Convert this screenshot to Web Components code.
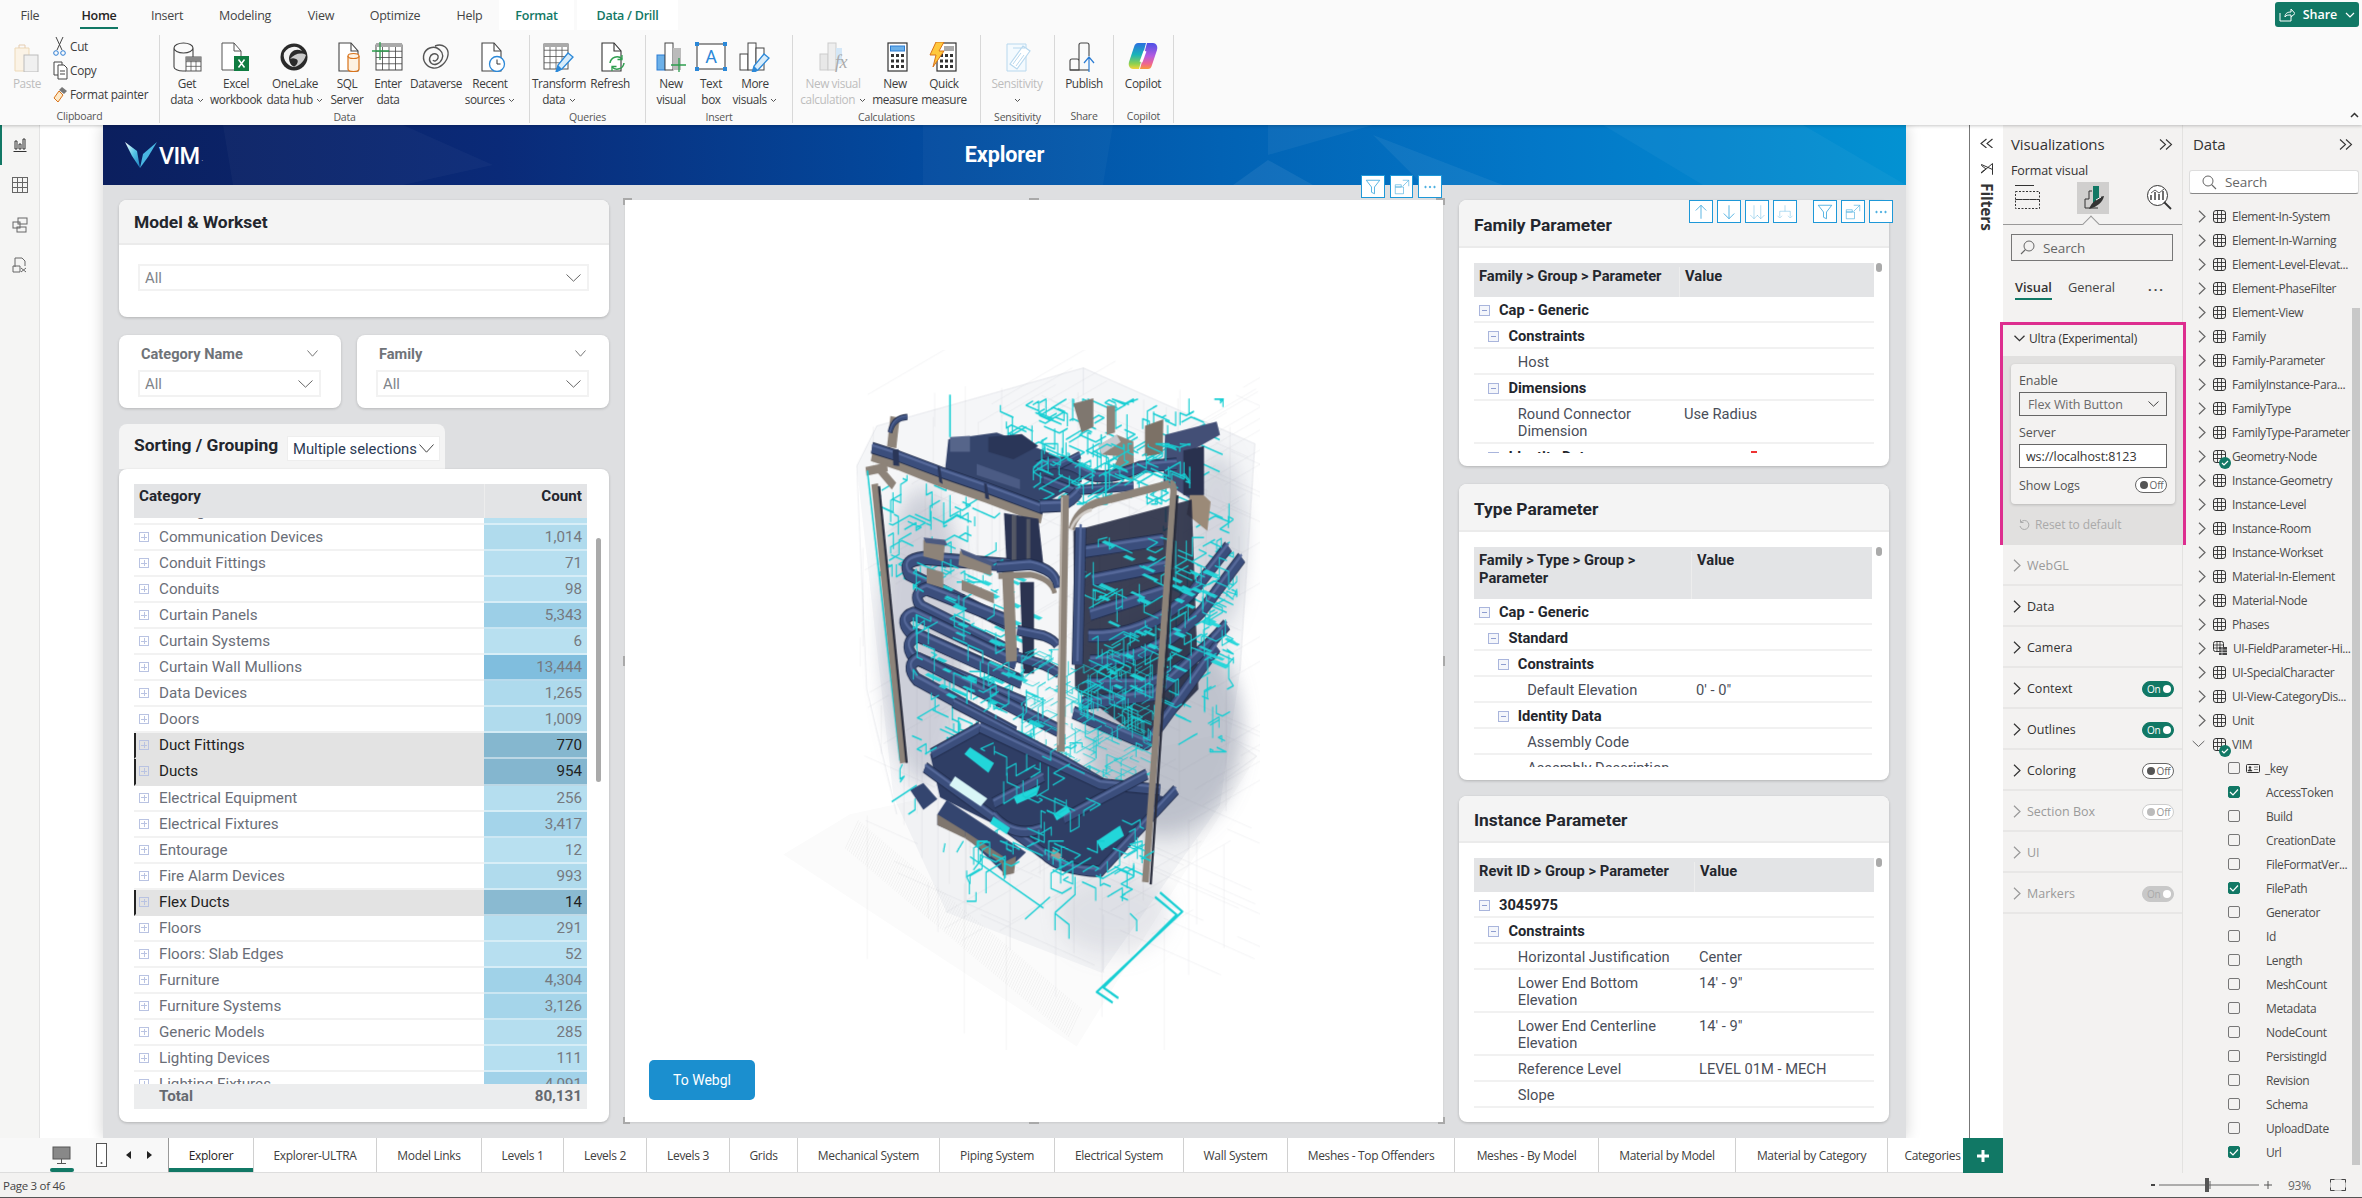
<!doctype html>
<html lang="en"><head><meta charset="utf-8"><title>Explorer</title>
<style>html,body{margin:0;background:#fff;overflow:hidden}</style></head>
<body>
<pbi-app>
  <pbi-ribbon slot="a">
    <rb-group w="160" label="Clipboard">
      <rb-btn w="54" icon="paste" off>Paste</rb-btn>
      <rb-small-list></rb-small-list>
    </rb-group>
    <rb-group w="370" label="Data">
      <rb-btn w="54" icon="getdata">Get<br>data <chev-d></chev-d></rb-btn>
      <rb-btn w="44" icon="excel">Excel<br>workbook</rb-btn>
      <rb-btn w="74" icon="onelake">OneLake<br>data hub <chev-d></chev-d></rb-btn>
      <rb-btn w="30" icon="sql">SQL<br>Server</rb-btn>
      <rb-btn w="52" icon="enter">Enter<br>data</rb-btn>
      <rb-btn w="44" icon="dataverse">Dataverse</rb-btn>
      <rb-btn w="64" icon="recent">Recent<br>sources <chev-d></chev-d></rb-btn>
    </rb-group>
    <rb-group w="116" label="Queries">
      <rb-btn w="58" icon="transform">Transform<br>data <chev-d></chev-d></rb-btn>
      <rb-btn w="44" icon="refresh">Refresh</rb-btn>
    </rb-group>
    <rb-group w="147" label="Insert">
      <rb-btn w="50" icon="newvisual">New<br>visual</rb-btn>
      <rb-btn w="30" icon="textbox">Text<br>box</rb-btn>
      <rb-btn w="58" icon="more">More<br>visuals <chev-d></chev-d></rb-btn>
    </rb-group>
    <rb-group w="188" label="Calculations">
      <rb-btn w="80" icon="fx" off>New visual<br>calculation <chev-d></chev-d></rb-btn>
      <rb-btn w="44" icon="measure">New<br>measure</rb-btn>
      <rb-btn w="54" icon="quick">Quick<br>measure</rb-btn>
    </rb-group>
    <rb-group w="74" label="Sensitivity">
      <rb-btn w="72" icon="sens" off>Sensitivity<br><chev-d></chev-d></rb-btn>
    </rb-group>
    <rb-group w="59" label="Share"><rb-btn w="58" icon="publish">Publish</rb-btn></rb-group>
    <rb-group w="60" label="Copilot"><rb-btn w="58" icon="copilot">Copilot</rb-btn></rb-group>
  </pbi-ribbon>

  <pbi-workspace slot="b">
    <pbi-page>
      <div slot="left">
        <pbi-card title="Model &amp; Workset" head="45" style="height:117px;flex:none"><div style="padding:19px 20px 0 19px"><pbi-drop>All</pbi-drop></div></pbi-card>
        <div style="display:flex;gap:16px;margin-top:18px">
          <pbi-slicer title="Category Name" style="width:222px"></pbi-slicer>
          <pbi-slicer title="Family" style="width:252px"></pbi-slicer>
        </div>
        <sort-tab></sort-tab>
        <cat-table></cat-table>
      </div>
      <bim-visual slot="center"></bim-visual>
      <div slot="right">
        <pbi-card title="Family Parameter" head="48" low tools style="height:266px">
          <param-table c1="205" h="34" body="156" w="400" head1="Family &gt; Group &gt; Parameter">
            <param-row lv="0" b>Cap - Generic</param-row>
            <param-row lv="1" b>Constraints</param-row>
            <param-row lv="2">Host</param-row>
            <param-row lv="1" b>Dimensions</param-row>
            <param-row lv="2" v="Use Radius">Round Connector<br>Dimension</param-row>
            <param-row lv="1" b>Identity Data<i slot="val" style="display:block;width:6px;height:2px;background:#e33;margin:2px 0 0 67px"></i></param-row>
          </param-table>
        </pbi-card>
        <pbi-card title="Type Parameter" head="48" low style="height:296px;margin-top:18px">
          <param-table c1="217" h="52" body="168" w="398" head1="Family &gt; Type &gt; Group &gt; Parameter">
            <param-row lv="0" b>Cap - Generic</param-row>
            <param-row lv="1" b>Standard</param-row>
            <param-row lv="2" b>Constraints</param-row>
            <param-row lv="3" v="0' - 0&quot;">Default Elevation</param-row>
            <param-row lv="2" b>Identity Data</param-row>
            <param-row lv="3">Assembly Code</param-row>
            <param-row lv="3">Assembly Description</param-row>
          </param-table>
        </pbi-card>
        <pbi-card title="Instance Parameter" head="47" low style="height:326px;margin-top:16px">
          <param-table c1="220" h="34" body="219" w="400" head1="Revit ID &gt; Group &gt; Parameter">
            <param-row lv="0" b>3045975</param-row>
            <param-row lv="1" b>Constraints</param-row>
            <param-row lv="2" v="Center">Horizontal Justification</param-row>
            <param-row lv="2" v="14' - 9&quot;">Lower End Bottom<br>Elevation</param-row>
            <param-row lv="2" v="14' - 9&quot;">Lower End Centerline<br>Elevation</param-row>
            <param-row lv="2" v="LEVEL 01M - MECH">Reference Level</param-row>
            <param-row lv="2">Slope</param-row>
          </param-table>
        </pbi-card>
      </div>
    </pbi-page>
  </pbi-workspace>

  <pbi-tabs slot="c"></pbi-tabs>
  <pbi-panes slot="d"></pbi-panes>
  <pbi-status slot="e"></pbi-status>
</pbi-app>

<script>
const SEG='"Open Sans","Noto Sans",sans-serif', RB='Roboto,"Liberation Sans",sans-serif', TEAL='#117865';
const def=(name,css,html)=>customElements.define(name,class extends HTMLElement{
  connectedCallback(){ if(this.shadowRoot) return; this.attachShadow({mode:'open'}).innerHTML='<style>'+css+'</style>'+(typeof html==='function'?html(this):html); }
});
const svg=(w,h,b,vb)=>`<svg xmlns="http://www.w3.org/2000/svg" width="${w}" height="${h}" viewBox="${vb||`0 0 ${w} ${h}`}" style="display:block;flex:none">${b}</svg>`;
const chevD=(w=12,h=7,c='#555')=>svg(w,h,`<path d="M.5 .5L${w/2} ${h-.8}L${w-.5} .5" fill="none" stroke="${c}" stroke-width="1"/>`);
const chevR=(c='#555')=>svg(8,13,`<path d="M1 .7L7 6.5L1 12.3" fill="none" stroke="${c}" stroke-width="1.2"/>`);
const L='fill="none" stroke="#444" stroke-width="1.1"';
const grid=(x,y,w,h,c,r,col='#555')=>{let s=`<rect x="${x}" y="${y}" width="${w}" height="${h}" fill="#fff" stroke="${col}"/>`;for(let i=1;i<c;i++)s+=`<path d="M${x+w*i/c} ${y}v${h}" stroke="${col}" stroke-width=".8"/>`;for(let i=1;i<r;i++)s+=`<path d="M${x} ${y+h*i/r}h${w}" stroke="${col}" stroke-width=".8"/>`;return s};
const doc=(c='#444')=>`<path d="M8 1h12l7 8v20H8z" fill="#fff" stroke="${c}" stroke-width="1.1"/><path d="M20 1v8h7" fill="none" stroke="${c}" stroke-width="1.1"/>`;
const pencil=(x,y)=>`<g transform="translate(${x} ${y})"><path d="M0 19L2 12L12 0L17 4L6 16z" fill="#d8ecfa" stroke="#2b88d8" stroke-width="1.3"/><path d="M0 19L2 12L6 16z" fill="#2b88d8"/></g>`;
const calc=()=>{let s=`<rect x="9" y="1" width="19" height="28" fill="#fff" stroke="#333" stroke-width="1.2"/>`;for(let r=0;r<3;r++)for(let c=0;c<3;c++)s+=`<rect x="${12+c*5}" y="${12+r*5.5}" width="3" height="3" fill="#333"/>`;return s};
const IC={
 paste:svg(32,30,`<path d="M4 6h14v23H4z" fill="#fbf3e6" stroke="#edd9b8"/><path d="M8 6V3h6v3" fill="none" stroke="#e5ccb0"/><rect x="13" y="13" width="14" height="17" fill="#f0f0f0" stroke="#bbb"/>`),
 getdata:svg(32,30,`<path d="M3 6v19c0 2 4 4 9 4h3M3 6c0-2.5 4-5 9.500-5S22 3.500 22 6s-4 5-9.500 5S3 8.500 3 6zM22 6v9" ${L}/>`+grid(15,15,15,14,3,3,'#555')+`<rect x="15" y="15" width="15" height="4" fill="#888"/>`),
 excel:svg(32,30,`<path d="M2 1h12l7 8v19H2z" fill="#fff" stroke="#555"/><path d="M14 1v8h7" fill="none" stroke="#555"/><rect x="14" y="14" width="15" height="15" fill="#107c41"/><path d="M18.500 17.500l6 8M24.500 17.500l-6 8" stroke="#fff" stroke-width="1.500"/>`),
 onelake:svg(32,30,`<circle cx="15" cy="15" r="13.500" fill="#2a2a2a"/><path d="M5 11c5-8 14-8 18-2-6-3-12 0-13 7 0 5 3 9 7 9-6 1-14-6-12-14z" fill="#f2f2f2"/><path d="M11 17c4-5 11-7 16-4-2 8-9 12-12 12 4-3 5-7 2-8-2-1-4-1-6 0z" fill="#c9c9c9"/>`),
 sql:svg(32,30,doc()+`<path d="M17 14v13c0 1.500 2.500 2.500 5.500 2.500s5.500-1 5.500-2.500V14" fill="#fdf2e3" stroke="#d9731a" stroke-width="1.2"/><ellipse cx="22.500" cy="14" rx="5.500" ry="2.500" fill="#fdf2e3" stroke="#d9731a" stroke-width="1.200"/>`),
 enter:svg(32,30,grid(4,3,26,25,4,4,'#444')+`<rect x="4" y="1" width="26" height="4" fill="#aaa"/><path d="M8 0v18M0 9h17" stroke="#2e9e4f" stroke-width="1.300"/>`),
 dataverse:svg(32,30,`<g fill="none" stroke="#555" stroke-width="1.400"><path d="M15 4c8-3 14 2 13 9s-8 14-15 13S2 18 4 12s9-8 13-6 7 6 5 11-8 7-11 4-1-8 2-9 6 1 5 4-4 4-5 2"/></g>`),
 recent:svg(32,30,doc()+`<circle cx="23" cy="22" r="7.500" fill="#fff" stroke="#2b88d8" stroke-width="1.300"/><path d="M23 17.500V22h3.500" fill="none" stroke="#333"/>`),
 transform:svg(32,30,grid(1,2,24,25,4,4,'#555')+`<rect x="1" y="1" width="24" height="4" fill="#aaa"/>`+pencil(13,11)),
 refresh:svg(32,30,doc('#333')+`<path d="M16 21a7 7 0 0 1 12-4M30 21a7 7 0 0 1-12 4" fill="none" stroke="#2e9e4f" stroke-width="1.500"/><path d="M28 13v4.500h-4.500M18 29v-4.500h4.500" fill="none" stroke="#2e9e4f" stroke-width="1.300"/>`),
 newvisual:svg(32,30,`<rect x="2" y="13" width="8" height="15" fill="#6cb0e8" stroke="#2b7cd3"/><rect x="10" y="1" width="8" height="27" fill="#fff" stroke="#444"/><rect x="18" y="6" width="8" height="22" fill="#bbb"/><path d="M24 16v15M16 23h15" stroke="#2e9e4f" stroke-width="1.300"/>`),
 textbox:svg(32,30,`<rect x="2" y="2" width="28" height="25" fill="#fff" stroke="#333"/><g fill="#2b88d8"><rect y="0" width="4" height="4"/><rect x="28" width="4" height="4"/><rect y="25" width="4" height="4"/><rect x="28" y="25" width="4" height="4"/></g><text x="16" y="21" text-anchor="middle" font-family="${RB.replace(/"/g,"'")}" font-size="18" fill="#2b88d8">A</text>`),
 more:svg(32,30,`<rect x="1" y="12" width="8" height="16" fill="#fff" stroke="#444"/><rect x="9" y="1" width="8" height="27" fill="#fff" stroke="#444"/><rect x="17" y="6" width="8" height="22" fill="#fff" stroke="#444"/>`+pencil(13,12)),
 fx:svg(32,30,`<rect x="3" y="12" width="8" height="16" fill="#e8e8e8" stroke="#ccc"/><rect x="11" y="1" width="8" height="27" fill="#eee" stroke="#ccc"/><rect x="19" y="6" width="6" height="16" fill="#d4e7f7"/><text x="18" y="26" font-family="'Liberation Serif',serif" font-style="italic" font-size="18" fill="#aaa">fx</text>`),
 measure:svg(32,30,calc()+`<rect x="11.500" y="4" width="14" height="5" fill="#6cb0e8" stroke="#2b7cd3"/>`),
 quick:svg(32,30,calc()+`<rect x="16" y="4" width="10" height="5" fill="#aaa"/><path d="M8 0h8l-5 9h5L5 25l3-12H2z" fill="#ffc83d" stroke="#d9731a"/>`),
 sens:svg(32,30,`<path d="M6 2h19v27H6z" fill="#f4fafe" stroke="#b8d8ee"/><path d="M12 6l12 0M9 22L22 4l7 5L16 27z" fill="#fff" stroke="#b8d8ee" stroke-width="1.200"/><path d="M12 22L20 11M15 24L23 13" stroke="#b8d8ee"/>`),
 publish:svg(32,30,`<path d="M2 28V19q0-2 2-2h5q2 0 2 2v9zM11 28V3q0-2 2-2h6q2 0 2 2v11" ${L}/><path d="M2 28h19" ${L}/><path d="M21 32V15M16 21l5-6 5 6" fill="none" stroke="#2b7cd3" stroke-width="1.200"/>`),
 copilot:svg(32,28,`<defs><linearGradient id="a" x1="0" y1="0" x2="0" y2="1"><stop offset="0" stop-color="#2a6fe0"/><stop offset=".45" stop-color="#19b4b8"/><stop offset=".8" stop-color="#8fd14f"/><stop offset="1" stop-color="#f5d43a"/></linearGradient><linearGradient id="b" x1="0" y1="0" x2="0" y2="1"><stop offset="0" stop-color="#4b50e6"/><stop offset=".5" stop-color="#b45be0"/><stop offset=".8" stop-color="#f0658f"/><stop offset="1" stop-color="#f79a3a"/></linearGradient></defs><path d="M11 1h8l-7 26H6c-3 0-5-3-4-7L7 5c1-3 2-4 4-4z" fill="url(#a)"/><path d="M21 27h-8L20 1h6c3 0 5 3 4 7l-5 15c-1 3-2 4-4 4z" fill="url(#b)"/><path d="M18 9l-4 11" stroke="#fff" stroke-width="3"/>`)
};

def('chev-d',':host{display:inline-block;vertical-align:middle;margin-left:1px}',()=>svg(7,5,'<path d="M1 1l2.500 2.500L6 1" fill="none" stroke="#555" stroke-width="1"/>'));

def('pbi-app',`:host{display:grid;grid-template-columns:2003px 359px;grid-template-rows:125px 1013px 35px 25px;width:2362px;height:1198px;font-family:${SEG};overflow:hidden;position:relative}
::slotted([slot=a]){grid-column:1/3}::slotted([slot=b]){grid-column:1;grid-row:2}::slotted([slot=c]){grid-column:1;grid-row:3}::slotted([slot=d]){grid-column:2;grid-row:2/4}::slotted([slot=e]){grid-column:1/3;grid-row:4}`,
`<slot name="a"></slot><slot name="b"></slot><slot name="c"></slot><slot name="d"></slot><slot name="e"></slot>`);

const TABS=[['File',60],['Home',78,1],['Insert',58],['Modeling',98],['View',54],['Optimize',94],['Help',55]];
def('pbi-ribbon',`:host{display:block;background:#fafafa;height:125px;box-shadow:0 1px 3px rgba(0,0,0,.22);position:relative;z-index:3;font-size:12px;color:#444}
.t{display:flex;height:30px;align-items:stretch;font-size:12.500px;letter-spacing:-.25px}
.t div{display:flex;align-items:center;justify-content:center;box-sizing:border-box;position:relative}
.a{font-weight:600;color:#252423}.a:after{content:"";position:absolute;left:20px;right:20px;bottom:1px;height:2px;background:${TEAL}}
.c{background:#fff;color:${TEAL};font-weight:600}
.g{display:flex;height:88px;margin-top:5px}
.share{position:absolute;right:3px;top:2px;width:84px;height:25px;border-radius:3px;background:${TEAL};color:#fff;display:flex;align-items:center;justify-content:center;gap:8px;font-size:12.500px;font-weight:600}
.up{position:absolute;right:3px;top:112px}`,
()=>`<div class="t">${TABS.map(x=>`<div style="width:${x[1]}px" class="${x[2]?'a':''}">${x[0]}</div>`).join('')}<div class="c" style="width:75px;margin-left:2px">Format</div><div class="c" style="width:101px;margin-left:3px">Data / Drill</div></div>
<div class="g"><slot></slot></div>
<div class="share">${svg(16,14,'<path d="M1 5v8h11V9M6 9c0-4 3-5 6-5V1l4 4.500L12 9V7c-3 0-5 0-6 2z" fill="none" stroke="#fff" stroke-width="1"/>')}<span>Share</span>${svg(10,6,'<path d="M1 1l4 4 4-4" fill="none" stroke="#fff" stroke-width="1.200"/>')}</div>
<div class="up">${svg(9,6,'<path d="M1 5l3.500-3.500L8 5" fill="none" stroke="#333" stroke-width="1.500"/>')}</div>`);

def('rb-group',`:host{display:flex;flex-direction:column;box-sizing:border-box;border-right:1px solid #d8d8d8;flex:none}
.i{display:flex;flex:1;padding-top:7px;padding-left:var(--pl,0)}.l{text-align:center;font-size:10.500px;letter-spacing:-.2px;height:17px;line-height:21px;color:#555}`,
e=>`<style>:host{width:${e.getAttribute('w')}px}</style><div class="i"><slot></slot></div><div class="l">${e.getAttribute('label')}</div>`);

def('rb-btn',`:host{display:flex;flex-direction:column;align-items:center;flex:none;font-size:11.800px;letter-spacing:-.38px;color:#3c3c3c}
.ic{height:33px}.tx{line-height:16px;text-align:center;white-space:nowrap}:host([off]){color:#bdbdbd}`,
e=>`<style>:host{width:${e.getAttribute('w')}px}</style><div class="ic">${IC[e.getAttribute('icon')]||''}</div><div class="tx"><slot></slot></div>`);

def('rb-small-list',`:host{display:flex;flex-direction:column;font-size:11.800px;letter-spacing:-.3px;color:#3c3c3c;margin-top:-8px;gap:0}
div{display:flex;align-items:center;height:24px;gap:4px}span{flex:none;width:13px}`,
()=>[['Cut',svg(13,20,'<g fill="none" stroke="#444"><path d="M3 1l6 13M10 1L4 14"/><circle cx="3" cy="17" r="2.300" stroke="#2b7cd3"/><circle cx="10" cy="17" r="2.300" stroke="#2b7cd3"/></g>')],
 ['Copy',svg(15,20,'<g fill="#fff" stroke="#444"><path d="M1 2h8v13H1z"/><path d="M5 5h6l3 3v11H5z"/><path d="M7 11h5M7 14h5" /></g>')],
 ['Format painter',svg(15,17,'<path d="M9 1l5 4-3 3-5-4z" fill="#777"/><path d="M6 5l4 4-5 7-4-4z" fill="#fde9c8" stroke="#d9731a"/>')]].map(x=>`<div style="margin-left:-1px"><span>${x[1]}</span>${x[0]}</div>`).join(''));

def('pbi-workspace',`:host{display:flex;background:#fff;height:1013px;overflow:hidden}
.rail{width:39px;border-right:1px solid #e3e3e3;background:#f5f5f4;flex:none;display:flex;flex-direction:column;align-items:center;position:relative}
.rail div{height:40px;display:flex;align-items:center;justify-content:center;margin-top:0;box-sizing:border-box;width:100%}
.rail div:first-child{border-left:2px solid ${TEAL};padding-right:2px}
.c{flex:none;width:1929px;padding-left:63px;box-sizing:border-box}
.f{flex:1;border-left:1px solid #777;display:flex;flex-direction:column;align-items:center;box-sizing:border-box;padding-top:13px;font-size:14px;font-weight:600;color:#333}
.f b{writing-mode:vertical-rl;font-weight:700;font-size:15.500px;margin-top:8px;letter-spacing:-.1px;line-height:1}`,
()=>`<div class="rail"><div>${svg(14,14,'<path d="M.5 13.500h13M2 11V3h2v8zM6 11V6h2v5zM10 11V1h2v10z" fill="none" stroke="#333"/>')}</div>
<div>${svg(16,16,'<rect x=".5" y=".5" width="15" height="15" fill="none" stroke="#666"/><path d="M.5 5.500h15M.5 10.500h15M5.500.5v15M10.500.5v15" stroke="#666"/>')}</div>
<div>${svg(16,16,'<g fill="none" stroke="#666"><rect x="6" y="1" width="9" height="6"/><rect x="1" y="5" width="7" height="6"/><rect x="5" y="10" width="9" height="5"/></g>')}</div>
<div>${svg(16,16,'<g fill="none" stroke="#666"><path d="M3 1h7l3 3v5M3 1v9"/><path d="M1 9h7v6H1zM9 11l5 4M14 11l-5 4"/></g>')}</div></div>
<div class="c"><slot></slot></div>
<div class="f">${svg(14,10,'<path d="M6.500 1L1 5.500l5.500 4.500M12.500 1L7 5.500l5.500 4.500" fill="none" stroke="#333" stroke-width="1.100"/>')}<div style="height:15px"></div>${svg(12,12,'<path d="M11.500 .5v11V6.500L.5 1.500v1L5 6 .5 9v1z" fill="none" stroke="#333"/>')}<b>Filters</b></div>`);

def('pbi-page',`:host{display:flex;flex-direction:column;width:1803px;height:1013px;background:#dedfe1;box-shadow:0 0 14px rgba(0,0,0,.18)}
.ban{height:60px;flex:none;display:grid;grid-template-columns:1fr auto 1fr;align-items:center;color:#fff;position:relative;background:linear-gradient(90deg,#0b1f5e 0,#0a2a78 22%,#034a9e 45%,#0262b4 62%,#0378c8 80%,#0392d2 100%);overflow:hidden}
.ban svg.bg{position:absolute;left:0;top:0}
.logo{display:flex;align-items:center;padding-left:22px;gap:2px;position:relative}
.logo b{font:500 23.500px/1 ${RB};letter-spacing:-.6px;margin-top:3px}
.ti{font:700 21.500px/1 ${RB};position:relative;letter-spacing:-.1px}
.b{flex:1;display:grid;grid-template-columns:490px 818px 430px;column-gap:16px;padding:15px 0 0 16px;box-sizing:border-box;align-items:start}
::slotted([slot=left]),::slotted([slot=right]){display:flex;flex-direction:column;height:922px}
.b>slot{display:block}`,
()=>`<div class="ban"><svg class="bg" width="1803" height="60"><g fill="#fff"><polygon opacity=".03" points="120,0 300,0 390,40 300,60 130,60"/><polygon opacity=".03" points="820,0 1010,0 1000,60 820,60"/><polygon opacity=".07" points="1130,60 1165,35 1210,60"/><polygon opacity=".05" points="1165,0 1270,0 1165,30"/><polygon opacity=".06" points="1270,10 1400,60 1320,60"/><polygon opacity=".04" points="1500,0 1700,0 1803,60 1600,60"/></g></svg>
<div class="logo">${svg(32,26,'<defs><linearGradient id="v" x1="0" y1="0" x2="1" y2="1"><stop offset="0" stop-color="#ffffff"/><stop offset=".5" stop-color="#59c8e8"/><stop offset="1" stop-color="#1a7fc0"/></linearGradient></defs><path d="M0 0l12 9 3 17L7 14z" fill="url(#v)"/><path d="M32 0L18 12l-3 14 8-11z" fill="#49b7e3"/>')}<b>VIM</b><span style="font-size:6px;align-self:flex-end;margin-bottom:5px">.</span></div>
<div class="ti">Explorer</div><div></div></div>
<div class="b"><slot name="left"></slot><slot name="center"></slot><slot name="right"></slot></div>`);

const TOOL={up:'<path d="M12 21V3M5 10l7-7 7 7"/>',down:'<path d="M12 3v18M5 14l7 7 7-7"/>',dd:'<path d="M8 3v18M3 16l5 5 5-5M17 3v18M12 16l5 5 5-5" opacity=".45"/>',exp:'<path d="M12 3v8M5 11h14M5 11v7M19 11v7M2 17l3 3 3-3M16 17l3 3 3-3" opacity=".45"/>',fil:'<path d="M3 3h18l-7 9v9l-4-2v-7z"/>',foc:'<path d="M3 9h8v3H3zM3 12h11v9H3zM13 3h8v8M21 3l-8 8" opacity=".7"/>',more:'<circle cx="6" cy="12" r="1" fill="#3aa6dd"/><circle cx="12" cy="12" r="1" fill="#3aa6dd"/><circle cx="18" cy="12" r="1" fill="#3aa6dd"/>'};
const toolBtn=(k,w=24)=>`<span class="tb" style="width:${w}px">${svg(18,18,`<g fill="none" stroke="#3aa6dd" stroke-width="1.100">${TOOL[k]}</g>`,'0 0 24 24')}</span>`;
const TBCSS=`.tb{display:flex;align-items:center;justify-content:center;background:#fff;border:1px solid #1e98d8;box-sizing:border-box;height:23px;flex:none}`;

def('pbi-card',`:host{display:flex;flex-direction:column;background:#fff;border-radius:8px;box-shadow:0 1px 3px rgba(0,0,0,.2);position:relative;overflow:visible}
.h{background:#f4f4f4;border-bottom:2px solid #ebebeb;border-radius:8px 8px 0 0;display:flex;align-items:center;padding-left:15px;box-sizing:border-box;font:700 17.400px ${RB};color:#23262d;flex:none}
:host([low]) .h{padding-top:3px}
.tools{position:absolute;top:0;left:230px;display:flex;gap:4px}.tools i{width:8px}${TBCSS}`,
e=>`<style>.h{height:${e.getAttribute('head')}px}</style><div class="h">${e.getAttribute('title')}</div><slot></slot>${e.hasAttribute('tools')?`<div class="tools">${['up','down','dd','exp'].map(k=>toolBtn(k)).join('')}<i></i>${['fil','foc','more'].map(k=>toolBtn(k)).join('')}</div>`:''}`);

def('pbi-drop',`:host{display:flex;align-items:center;justify-content:space-between;height:27px;box-sizing:border-box;border:2px solid #f2f2f2;padding:0 6px 0 5px;font:14.800px ${RB};color:#80848a;background:#fff}`,
()=>`<slot></slot>${chevD(15,8,'#666')}`);

def('pbi-slicer',`:host{display:block;height:73px;background:#fff;border-radius:8px;box-shadow:0 1px 3px rgba(0,0,0,.18);box-sizing:border-box;padding:0 20px 0 19px}
.h{display:flex;justify-content:space-between;align-items:center;height:35px;padding:2px 3px 0;box-sizing:border-box;font:700 14.600px ${RB};color:#6f7378}`,
e=>`<div class="h"><span>${e.getAttribute('title')}</span>${chevD(11,7,'#777')}</div><pbi-drop>All</pbi-drop>`);

def('sort-tab',`:host{display:flex;align-items:center;height:45px;width:326px;background:#f4f4f4;border-radius:8px 8px 0 0;margin-top:16px;box-sizing:border-box;padding-left:15px;flex:none;font:700 17.400px ${RB};color:#23262d}
.sp{margin-top:-3px}
.d{margin-left:auto;margin-right:5px;width:153px;height:25px;background:#fff;box-sizing:border-box;border:1px solid #eee;display:flex;align-items:center;padding:0 5px;justify-content:space-between;font:400 14.800px ${RB};color:#2b3a55;margin-top:4px}`,
()=>`<span class="sp">Sorting / Grouping</span><div class="d"><span>Multiple selections</span>${chevD(15,9,'#444')}</div>`);

const CATS=[['Ceilings',0],['Communication Devices',1014],['Conduit Fittings',71],['Conduits',98],['Curtain Panels',5343],['Curtain Systems',6],['Curtain Wall Mullions',13444],['Data Devices',1265],['Doors',1009],['Duct Fittings',770,1],['Ducts',954,1],['Electrical Equipment',256],['Electrical Fixtures',3417],['Entourage',12],['Fire Alarm Devices',993],['Flex Ducts',14,1],['Floors',291],['Floors: Slab Edges',52],['Furniture',4304],['Furniture Systems',3126],['Generic Models',285],['Lighting Devices',111],['Lighting Fixtures',4091]];
const mix=(v,sel)=>{const t=Math.pow(v/13444,.75);let c=[184-t*56,224-t*34,240-t*18];if(sel)c=c.map((x,i)=>x*[.75,.83,.87][i]);return `rgb(${c.map(Math.round)})`};
def('cat-table',`:host{display:flex;flex-direction:column;flex:1;background:#fff;border-radius:8px;box-shadow:0 1px 3px rgba(0,0,0,.2);padding:15px 22px 13px 15px;font:15.200px ${RB};position:relative;margin-top:0;z-index:1}
.hd,.tot,.r{display:grid;grid-template-columns:350px 103px}
.hd{height:34px;background:#e3e4e6;font-weight:700;color:#23262d;line-height:25px;flex:none}.hd span{padding:0 5px}.hd span+span{text-align:right;border-left:1px solid #ededed}
.v{height:566px;overflow:hidden;flex:none}.in{margin-top:-19px}
.r{height:26.05px;line-height:24px;box-sizing:border-box;color:#6a6e78}
.n{display:flex;align-items:center;gap:10px;padding-left:5px;border-bottom:2px solid #f2f2f2;white-space:nowrap;box-sizing:border-box}
.p{width:10px;height:10px;border:1px solid #b9c3e2;box-sizing:border-box;flex:none;position:relative}.p:before{content:"";position:absolute;left:1px;right:1px;top:3.500px;height:1px;background:#b9c3e2}.p:after{content:"";position:absolute;top:1px;bottom:1px;left:3.500px;width:1px;background:#b9c3e2}
.c{text-align:right;padding-right:5px;border-bottom:2px solid rgba(255,255,255,.45);color:#75797f}
.s .n{background:#e3e3e3;color:#222;border-left:2px solid #222;padding-left:3px;border-bottom-color:#e3e3e3}.s .c{color:#222}
.tot{height:25px;background:#ecedee;font-weight:700;color:#666a70;line-height:25px;flex:none}.tot span:first-child{padding-left:25px}.tot span+span{text-align:right;padding-right:5px}
.sb{position:absolute;left:477px;top:69px;width:5px;height:244px;border-radius:3px;background:#aaa}`,
()=>`<div class="hd"><span>Category</span><span>Count</span></div><div class="v"><div class="in">${CATS.map(x=>`<div class="r ${x[2]?'s':''}"><div class="n"><i class="p"></i><span>${x[0]}</span></div><div class="c" style="background:${mix(x[1],x[2])}">${x[1]?x[1].toLocaleString('en-US'):''}</div></div>`).join('')}</div></div><div class="tot"><span>Total</span><span>80,131</span></div><div class="sb"></div>`);

def('param-table',`:host{display:block;padding:15px 15px 0 15px;font:14.700px/17px ${RB};color:#4a4e59;position:relative}
.hd{display:flex;background:#e3e4e6;font-weight:700;color:#23262d;line-height:18px;box-sizing:border-box;padding-top:4px}.hd span{padding:0 5px}.hd span+span{border-left:1px solid #ededed}
.bd{overflow:hidden}.dot{position:absolute;top:15px;left:417px;width:6px;height:9px;border-radius:3px;background:#aaa}`,
e=>{const g=k=>e.getAttribute(k);return `<style>:host{--c1:${g('c1')}px;width:${g('w')}px}.hd{height:${g('h')}px;width:${g('w')}px}.hd span:first-child{width:${g('c1')}px;box-sizing:border-box}.bd{height:${g('body')}px;width:${g('w')}px}</style><div class="hd"><span>${g('head1')}</span><span>Value</span></div><div class="bd"><slot></slot></div><div class="dot"></div>`});

def('param-row',`:host{display:flex;min-height:26px;box-sizing:border-box;border-bottom:2px solid #f1f1f1;padding-top:5px;padding-bottom:2px}
.a{width:var(--c1);flex:none;box-sizing:border-box;display:flex;align-items:flex-start;white-space:nowrap}
.m{width:11px;height:11px;border:1px solid #a9b5dc;background:#f4f6fb;box-sizing:border-box;position:relative;flex:none;margin:3px 9px 0 0}.m:before{content:"";position:absolute;left:2px;right:2px;top:4px;height:1px;background:#8f9ed0}
.v{padding-left:5px}:host([b]) .a{font-weight:700;color:#23262d}`,
e=>{const lv=+e.getAttribute('lv');const bold=e.hasAttribute('b');return `<div class="a" style="padding-left:${bold?5+lv*9.400:5+lv*9.400+20}px">${bold?'<i class="m"></i>':''}<span><slot></slot></span></div><div class="v">${e.getAttribute('v')||''}<slot name="val"></slot></div>`});

/* ---------- 3D model ---------- */
def('bim-visual',`:host{display:block;position:relative;width:818px;height:922px;background:#fff;box-shadow:0 1px 2px rgba(0,0,0,.1);box-sizing:border-box;padding:150px 0 0 155px}
.tools{position:absolute;top:-25px;right:1px;display:flex;gap:5px}${TBCSS}
.go{position:absolute;left:24px;bottom:22px;width:106px;height:40px;border-radius:5px;background:#1b8fcf;color:#fff;display:flex;align-items:center;justify-content:center;font:14px ${RB}}
.h{position:absolute;background:#a9a9a9}`,
()=>{
 const W=1440,H=1568;let s='';
 let seed=12345;const R=()=>(seed=(seed*1664525+1013904223)>>>0)/4294967296;
 const dirs=[[.96,.32],[.96,-.42],[0,1],[-.96,-.32],[-.96,.42],[0,-1]];
 const cy='#17ced3';
 const rnd=(x0,y0,x1,y1,n,w0,op)=>{let o='';for(let i=0;i<n;i++){let x=x0+R()*(x1-x0),y=y0+R()*(y1-y0),d=`M${x|0} ${y|0}`;const k=2+(R()*3|0);for(let j=0;j<k;j++){const v=dirs[R()*6|0],l=10+R()*42;x+=v[0]*l;y+=v[1]*l;x=Math.min(x1,Math.max(x0,x));y=Math.min(y1,Math.max(y0,y));d+=`L${x|0} ${y|0}`}o+=`<path d="${d}"/>`}return `<g fill="none" stroke="${cy}" stroke-width="${w0}" opacity="${op}" stroke-linejoin="round">${o}</g>`};
 const patch=(x0,y0,x1,y1,n)=>{let o='';for(let i=0;i<n;i++){const x=x0+R()*(x1-x0),y=y0+R()*(y1-y0),a=18+R()*30,b=6+R()*7;o+=`<polygon points="${x|0},${y|0} ${(x+a)|0},${(y+a*.33)|0} ${(x+a+b)|0},${(y+a*.33-b*.5)|0} ${(x+b)|0},${(y-b*.5)|0}"/>`}return `<g fill="#22d6da" opacity=".95">${o}</g>`};
 const wire=(n,c,op)=>{let o='';for(let i=0;i<n;i++){const x=240+R()*1150,y=80+R()*1250,v=dirs[R()*3|0],l=60+R()*320;o+=`<path d="M${x|0} ${y|0}l${(v[0]*l)|0} ${(v[1]*l)|0}"/>`}return `<g stroke="${c}" stroke-width="1" opacity="${op}" fill="none">${o}</g>`};
 const duct=(d,w)=>`<path d="${d}" fill="none" stroke="#1f2a48" stroke-width="${w+4}" stroke-linejoin="round"/><path d="${d}" fill="none" stroke="#3b4e7c" stroke-width="${w}" stroke-linejoin="round"/><path d="${d}" transform="translate(0 ${-w*.26})" fill="none" stroke="#56699a" stroke-width="${w*.24}" stroke-linejoin="round"/>`;
 const taupe=(d,w,c='#8d8379')=>`<path d="${d}" fill="none" stroke="${c}" stroke-width="${w}" stroke-linejoin="round"/>`;
 const P=(pts,f)=>`<polygon points="${pts}" fill="${f}"/>`;
 s+=`<defs><filter id="bl" x="-20%" y="-20%" width="140%" height="140%"><feGaussianBlur stdDeviation="26"/></filter></defs>`;
 s+=P('210,1040 10,1130 890,1560 1430,910 1320,860','#fbfbfb');
 s+=`<path d="M215 1085L890 1510" stroke="#d8d8d8" stroke-width="75" stroke-dasharray="1 6" opacity=".5" fill="none"/>`;
 s+=P('230,260 290,170 910,40 1425,210 1380,720 1320,1020 965,1395 500,1260 340,1000','rgba(196,200,212,.17)');
 s+=`<g filter="url(#bl)"><ellipse cx="1150" cy="850" rx="240" ry="240" fill="#7f8498" opacity=".45"/><ellipse cx="430" cy="640" rx="130" ry="330" fill="#9297aa" opacity=".4"/><ellipse cx="1310" cy="430" rx="90" ry="200" fill="#9ea2b4" opacity=".38"/><ellipse cx="1000" cy="1260" rx="170" ry="90" fill="#a9adbd" opacity=".25"/></g>`;
 s+=`<g fill="none" stroke="#b6b9c4" stroke-width="1.200" opacity=".55"><path d="M230 260L290 170L910 40L1425 210L1380 720M910 40v60M230 260l30 500 90 280M1330 860l100 50-110 60M970 1395l0-130"/></g>`;
 s+=wire(240,'#8a8d9c',.25);
 s+=rnd(640,110,1330,330,110,3.600,1)+rnd(300,280,660,520,48,3.400,1)+rnd(360,720,700,1000,30,3.400,1)+rnd(1150,330,1360,900,45,3.400,1);
 s+=P('505,200 650,185 780,222 905,262 905,295 780,350 610,300 495,270','#35456c');
 s+=P('510,195 570,192 570,228 510,228','#56658a')+P('625,195 725,188 775,215 700,245 625,228','#2a3658')+P('590,255 720,290 720,312 590,280','#4b5b84');
 s+=P('880,120 940,108 940,172 905,185','#7f776f')+P('980,125 1005,125 1005,185 980,190','#8d8379');
 s+=P('1095,170 1150,155 1148,232 1095,238','#7c7166')+P('1155,190 1310,160 1320,190 1235,225 1235,335 1150,295','#434f76');
 s+=P('1235,300 1292,340 1282,405 1220,368','#9b8a78')+P('1210,225 1272,215 1272,325 1210,325','#29314e');
 s+=P('955,214 1010,190 1060,205 1062,292 990,282 1016,238 965,234','#8d8379')+P('955,214 1010,190 1022,206 965,234','#c8cacf');
 s+=duct('M770 262Q850 240 905 270T1080 262L1190 255',24);
 s+=duct('M790 290L880 315L1060 305',18);
 s+=duct('M830 262L900 235',14);
 s+=rnd(760,210,1230,345,60,3.400,1);
 s+=taupe('M275 238L355 258L482 296L622 332L785 378',22)+duct('M276 219L356 238L484 274L624 310L790 356',22);
 s+=P('355,222 358,260 340,258 338,225','#2a3658')+P('480,262 488,300 478,296 472,260','#2a3658')+P('620,300 628,335 616,332 612,298','#2a3658');
 s+=taupe('M345 150L335 218',28)+duct('M382 150Q338 152 330 185',10);
 s+=taupe('M300 268L342 305M258 272L322 262',20);
 s+=duct('M780 350L842 348Q880 335 895 318',26);
 s+=`<path d="M510 100v95" stroke="${cy}" stroke-width="5"/>`;
 s+=`<path d="M262 270L360 920" fill="none" stroke="${cy}" stroke-width="4.500"/>`;
 s+=taupe('M284 300L370 925',20)+taupe('M297 305L380 925',7,'#2a2d3c');
 s+=P('672,365 775,378 790,480 680,485','#2a3352')+taupe('M702 370v112',14,'#545865')+taupe('M745 378v105',12,'#545865');
 for(const d of ['M690 482L430 466Q362 472 386 502L680 612','M700 612L440 535Q392 546 425 576L712 684','M708 702L400 590Q352 602 390 632L725 742','M725 745L415 640Q366 656 400 688L735 792','M835 852L415 692Q372 706 410 738L705 858'])s+=duct(d,27);
 s+=patch(430,490,760,860,46);
 s+=rnd(400,470,740,860,46,3.200,1);
 s+=P('430,425 495,430 490,474 430,462','#8d8379')+P('540,450 634,480 634,505 535,482','#8d8379')+P('440,488 490,498 490,534 440,522','#8d8379')+P('545,515 642,545 642,568 545,538','#8d8379');
 s+=P('430,420 495,425 502,438 437,432','#4c5a80')+P('540,445 634,474 644,487 548,458','#4c5a80');
 s+=P('720,520 762,520 762,725 730,725','#2b3350');
 s+=taupe('M683 495L695 698',34);
 s+=taupe('M655 506L750 503Q815 512 824 545',14)+duct('M650 486L750 480Q830 492 834 532',22);
 s+=duct('M712 628L790 640Q825 650 832 662',20)+duct('M712 688L790 705Q820 716 836 724',20);
 s+=P('880,405 1235,335 1255,760 1100,880 885,760','rgba(28,34,58,.86)');
 for(const d of ['M905 452L1150 425','M935 515L1175 480','M930 592L1170 535','M925 640Q1100 645 1240 540L1345 440','M930 697Q1130 697 1265 585L1385 465','M920 748L1100 748Q1220 722 1340 615','M905 792L1120 772L1300 650','M880 812L1100 882L1310 665'])s+=duct(d,26);
 s+=patch(1150,480,1340,720,22)+patch(920,420,1200,760,22);
 s+=rnd(900,420,1370,880,90,3,1);
 s+=rnd(725,670,1120,965,150,2.200,1);
 s+=duct('M520 790L840 915L1000 985',20);
 s+=P('450,905 600,838 950,958 1150,1000 1040,1112 930,1172 830,1132 480,1002','#2f3e65');
 for(const d of ['M435 935L790 1128Q840 1165 960 1168L1188 985','M455 905L600 845','M600 845L960 972L1140 985','M640 1015Q730 980 790 955','M640 1042Q700 1095 785 1072','M850 1050L1100 950'])s+=duct(d,22);
 s+=P('525,955 622,1005 602,1022 508,975','#d9f6f7')+`<g fill="#22d6da"><polygon points="570,890 642,925 625,947 553,905"/><polygon points="700,1000 780,975 770,997 710,1017"/><polygon points="950,1100 1020,1065 1032,1088 965,1122"/><polygon points="820,1040 860,1020 872,1034 830,1054"/><polygon points="640,1045 690,1070 680,1085 630,1060"/></g>`;
 s+=rnd(600,880,1120,1170,40,3,1);
 s+=P('472,1040 500,1008 738,1125 672,1172 560,1092 472,1064','#34456f')+P('472,1040 555,1078 555,1094 472,1064','#7f766e')+P('555,1078 672,1136 668,1152 555,1094','#7f766e')+P('665,1150 708,1134 702,1172 668,1178','#7f766e');
 s+=P('390,985 430,970 472,1006 430,1030','#34456f');
 s+=taupe('M815 1125l25 12',16,'#a39b92');
 s+=taupe('M855 325L842 900',24)+taupe('M846 330L834 885',5,'#bfb7ae');
 s+=duct('M902 398L892 705',30);
 s+=taupe('M874 402Q887 360 950 342L1168 300',18)+taupe('M1170 300Q1184 302 1180 325L1096 1192',20)+taupe('M1192 325L1112 1197',7,'#2a2d3c');
 s+=`<path d="M872 402Q890 368 935 358" fill="none" stroke="#d2cdc8" stroke-width="7"/>`;
 s+=rnd(560,1100,1125,1235,34,3.400,1);
 s+=`<g fill="none" stroke="${cy}" stroke-width="5.500" stroke-linejoin="round"><path d="M1140 1215L1207 1258L950 1438L998 1462"/><path d="M1125 1225L1190 1265L970 1428L1015 1452"/></g>`;
 s+=`<g fill="none" stroke="${cy}" stroke-width="3.600"><path d="M335 1012L410 975M385 1040l20-10v-25M435 905L470 890M570 1135L790 1250M580 1165l30-30M735 1275l75-50M825 1260l60-40v-40M825 1260v40M825 1262l42 25v32M1050 1262l20 15v25M490 1125l5-20M530 1125l20-25"/></g>`;
 return `<div class="tools">${['fil','foc','more'].map(k=>toolBtn(k,k=='foc'?23:24)).join('')}</div>${svg(480,700,s,'0 0 '+W+' '+H).replace('style="display:block;flex:none"','style="display:block" preserveAspectRatio="none"')}
 <div class="go">To Webgl</div>
 <i class="h" style="left:0;top:-2px;width:7px;height:2px"></i><i class="h" style="left:-2px;top:-2px;width:2px;height:7px"></i>
 <i class="h" style="left:404px;top:-2px;width:10px;height:2px"></i><i class="h" style="right:0;top:-2px;width:7px;height:2px"></i><i class="h" style="right:-2px;top:-2px;width:2px;height:7px"></i>
 <i class="h" style="left:-2px;top:456px;width:2px;height:10px"></i><i class="h" style="right:-2px;top:456px;width:2px;height:10px"></i>
 <i class="h" style="left:-2px;bottom:-2px;width:2px;height:7px"></i><i class="h" style="left:-2px;bottom:-2px;width:7px;height:2px"></i>
 <i class="h" style="left:404px;bottom:-2px;width:10px;height:2px"></i><i class="h" style="right:-2px;bottom:-2px;width:2px;height:7px"></i><i class="h" style="right:-2px;bottom:-2px;width:7px;height:2px"></i>`});

/* ---------- tabs ---------- */
const PT=[['Explorer',86,1],['Explorer-ULTRA',123],['Model Links',105],['Levels 1',82],['Levels 2',83],['Levels 3',83],['Grids',68],['Mechanical System',142],['Piping System',115],['Electrical System',129],['Wall System',104],['Meshes - Top Offenders',167],['Meshes - By Model',144],['Material by Model',137],['Material by Category',152],['Categories',90]];
def('pbi-tabs',`:host{display:flex;height:35px;background:#fff;box-sizing:border-box;border-bottom:1px solid #ddd;font-size:12px;letter-spacing:-.32px;color:#404040;position:relative;z-index:2}
.ctl{width:168px;flex:none;display:flex;background:#f8f8f8;align-items:center;box-sizing:border-box;position:relative}
.ul{position:absolute;left:50px;bottom:0;width:24px;height:4px;background:${TEAL};border-radius:2px}
.tr{display:flex;overflow:hidden;flex:1;min-width:0}.t{flex:none;display:flex;align-items:center;justify-content:center;border-right:1px solid #d0d0d0;box-sizing:border-box;white-space:nowrap;position:relative}
.t:first-child{border-left:1px solid #999}
.t.a{color:#252423}.t.a:after{content:"";position:absolute;left:0;right:0;bottom:0;height:4px;background:${TEAL}}
.add{width:40px;flex:none;background:${TEAL};display:flex;align-items:center;justify-content:center;height:35px}`,
()=>`<div class="ctl"><span style="margin-left:52px">${svg(19,19,'<rect x="1" y="1" width="17" height="12" fill="#888" stroke="#555"/><path d="M9.500 13v4M5 17.500h9" stroke="#555"/>')}</span><span style="margin-left:25px">${svg(11,24,'<rect x=".5" y=".5" width="10" height="23" fill="#fff" stroke="#555"/><circle cx="5.500" cy="20" r="1" fill="#555"/>')}</span><span style="margin-left:19px">${svg(5,8,'<path d="M5 0v8L0 4z" fill="#222"/>')}</span><span style="margin-left:16px">${svg(5,8,'<path d="M0 0v8l5-4z" fill="#222"/>')}</span><i class="ul"></i></div>
<div class="tr">${PT.map(x=>`<div class="t ${x[2]?'a':''}" style="width:${x[1]}px">${x[0]}</div>`).join('')}</div><div class="add">${svg(14,14,'<path d="M7 1v12M1 7h12" stroke="#fff" stroke-width="3"/>')}</div>`);

def('pbi-status',`:host{display:flex;align-items:center;height:25px;background:#f3f2f1;box-sizing:border-box;border-bottom:1px solid #555;font-size:11.500px;letter-spacing:-.28px;color:#444;padding-left:3px;position:relative;z-index:4}
.r{margin-left:auto;display:flex;align-items:center;margin-right:16px;color:#666}`,
()=>`<span>Page 3 of 46</span><div class="r">${svg(4,2,'<rect width="4" height="2" fill="#444"/>')}<span style="width:4px"></span>${svg(100,14,'<path d="M0 7h100" stroke="#666"/><rect x="46" y="0" width="4" height="14" fill="#555"/><path d="M51 3v8" stroke="#666"/>')}<span style="width:5px"></span>${svg(8,8,'<path d="M4 0v8M0 4h8" stroke="#555"/>')}<span style="width:16px"></span><span style="width:42px;font-size:12px">93%</span>${svg(16,12,'<g fill="none" stroke="#444"><path d="M.5 3.500v-3h4M11.500.5h4v3M15.500 8.500v3h-4M4.500 11.500h-4v-3"/><rect x=".5" y=".5" width="15" height="11" stroke-opacity=".3"/></g>')}</div>`);

/* ---------- panes ---------- */
const tog=(st,dis)=>{const on=st=='on';const bg=on?(dis?'#c8c8c8':TEAL):'#fff';const bd=on?bg:(dis?'#ccc':'#666');const kn=on?'#fff':(dis?'#bbb':'#555');const tc=on?(dis?'#aaa':'#fff'):(dis?'#999':'#666');
 return `<span class="tg" style="background:${bg};border-color:${bd};flex-direction:${on?'row':'row-reverse'};color:${tc}"><span>${on?'On':'Off'}</span><i style="background:${kn}"></i></span>`};
const TGCSS=`.tg{width:32px;height:16px;box-sizing:border-box;border:1px solid;border-radius:8px;display:flex;align-items:center;justify-content:space-between;font-size:10px;padding:0 2.500px 0 4px;flex:none;letter-spacing:-.2px;line-height:1}.tg i{width:8px;height:8px;border-radius:50%;flex:none}`;
const ACC=[['WebGL',,1],['Data'],['Camera'],['Context','on'],['Outlines','on'],['Coloring','off'],['Section Box','off',1],['UI',,1],['Markers','on',1]];
const TREE='Element-In-System,Element-In-Warning,Element-Level-Elevat...,Element-PhaseFilter,Element-View,Family,Family-Parameter,FamilyInstance-Para...,FamilyType,FamilyType-Parameter,Geometry-Node,Instance-Geometry,Instance-Level,Instance-Room,Instance-Workset,Material-In-Element,Material-Node,Phases,UI-FieldParameter-Hi...,UI-SpecialCharacter,UI-View-CategoryDis...,Unit'.split(',');
const FIELDS='_key,AccessToken,Build,CreationDate,FileFormatVer...,FilePath,Generator,Id,Length,MeshCount,Metadata,NodeCount,PersistingId,Revision,Schema,UploadDate,Url'.split(',');
const tbl=svg(13,13,'<rect x=".5" y=".5" width="12" height="12" rx="2.500" fill="none" stroke="#333"/><path d="M4.500.5v12M8.500.5v12M.5 4.500h12M.5 8.500h12" stroke="#333" stroke-width=".9"/>');
const badge=`<i class="bd">${svg(8,6,'<path d="M1 3l2 2 4-4" fill="none" stroke="#fff" stroke-width="1.200"/>')}</i>`;
const chk=on=>`<i class="cb ${on?'on':''}">${on?svg(10,8,'<path d="M1 4l3 3 5-5.500" fill="none" stroke="#fff" stroke-width="1.200"/>'):''}</i>`;
def('pbi-panes',`:host{display:flex;height:1048px;background:#f3f2f1;font-size:12.500px;color:#444;position:relative;letter-spacing:-.1px}
.vz{width:180px;box-sizing:border-box;border-right:1px solid #e3e2e0;flex:none;display:flex;flex-direction:column}
.hd{height:38px;flex:none;display:flex;align-items:center;justify-content:space-between;padding:0 9px 0 8px;font-size:15px;font-weight:500;color:#333;letter-spacing:-.1px}
.fv{height:16px;line-height:16px;padding-left:8px;font-weight:500;color:#333;flex:none}
.ic{height:46px;border-bottom:1px solid #999;display:flex;align-items:center;position:relative;flex:none;padding-top:2px;box-sizing:border-box}
.ic span{position:absolute;top:4px}.nt{position:absolute;left:82px;bottom:-6px;width:11px;height:11px;background:#f3f2f1;border:solid #999;border-width:1px 0 0 1px;transform:rotate(45deg)}
.se{margin:9px 9px 0 8px;height:27px;border:1px solid #777;box-sizing:border-box;display:flex;align-items:center;padding-left:8px;gap:8px;font-size:13.500px;color:#666;flex:none}
.tb{display:flex;height:41px;flex:none;align-items:center;font-size:12.800px;position:relative;padding-left:12px;gap:16px;box-sizing:border-box;padding-top:12px;letter-spacing:0}
.tb b{font-weight:600;color:#333;border-bottom:2px solid ${TEAL};padding-bottom:2px;margin-top:3px}.tb u{text-decoration:none;padding-bottom:4px;margin-top:3px}.tb s{text-decoration:none;margin-left:auto;margin-right:17px;letter-spacing:2px;margin-top:-4px;font-weight:700}
.px{margin:20px -3px 0 -3px;width:186px;height:223px;border:3px solid #dd2e8f;box-sizing:border-box;flex:none;position:relative;z-index:2;background:#f3f2f1;display:flex;flex-direction:column}
.ph{height:31px;display:flex;align-items:center;padding:0 0 4px 11px;box-sizing:border-box;gap:4px;font-weight:500;color:#333;flex:none;font-size:12px;letter-spacing:-.2px}
.pb{flex:1;background:#e1e0df;padding:8px 8px 0 8px}
.cd{background:#f3f2f1;border-radius:4px;box-shadow:0 1px 3px rgba(0,0,0,.18);height:140px;box-sizing:border-box;padding:8px;font-size:12.500px;color:#555}
.lb{height:18px;line-height:18px}.sl{height:24px;margin-top:2px;border:1px solid #666;box-sizing:border-box;display:flex;align-items:center;justify-content:space-between;padding:0 7px 0 8px;color:#6b6b6b}.ip{background:#fff;padding-left:6px;color:#333}
.sw{display:flex;justify-content:space-between;align-items:center;margin-top:8px;height:18px}
.rs{display:flex;align-items:center;gap:5px;padding:12px 8px;color:#aaa;font-size:12px}
.ac{height:41px;box-sizing:border-box;border-bottom:2px solid #e8e7e6;display:flex;align-items:center;padding:2px 8px 0 10px;gap:4px;flex:none;font-weight:500;color:#333;font-size:12.500px;letter-spacing:0}.ac.d{color:#9a9a9a}.ac span.n{flex:1;margin-left:2px}
${TGCSS}
.da{flex:1;position:relative;padding-left:1px}.hd2{padding:0 9px}
.se2{margin:7px 3px 0 5px;height:24px;background:#fff;border:1px solid #ddd;border-bottom-color:#888;border-radius:3px;box-sizing:border-box;display:flex;align-items:center;padding-left:12px;gap:8px;font-size:13.500px;color:#666}
.li{margin-top:10px}.ro{height:24px;display:flex;align-items:center;position:relative;white-space:nowrap;color:#4b4b4b;font-size:12px;letter-spacing:-.4px}
.ro .ch{width:29px;display:flex;justify-content:center;padding-left:6px;box-sizing:border-box;flex:none;margin-right:0}.ro .ti{position:relative;margin-right:6px;display:block}
.bd{position:absolute;left:6px;top:7px;width:12px;height:12px;border-radius:50%;background:${TEAL};display:flex;align-items:center;justify-content:center;border:0}
.ro.f{padding-left:44px}.cb{width:12px;height:12px;border:1px solid #777;box-sizing:border-box;border-radius:2px;background:transparent;flex:none;margin-right:26px;display:flex;align-items:center;justify-content:center}.cb.on{background:${TEAL};border-color:${TEAL}}
.cb.k{margin-right:6px}.kk{width:20px;flex:none}
.sc{position:absolute;right:2px;top:183px;width:8px;height:857px;background:#c8c8c8}`,
()=>`<div class="vz">
 <div class="hd"><span>Visualizations</span>${svg(14,11,'<path d="M1 .5L6.500 5.500 1 10.500M7 .5L12.500 5.500 7 10.500" fill="none" stroke="#333" stroke-width="1.100"/>')}</div>
 <div class="fv">Format visual</div>
 <div class="ic"><span style="left:12px;top:6px">${svg(25,24,'<path d="M0 .5h19" stroke="#333"/><g fill="none" stroke="#333" stroke-dasharray="2 1.500"><rect x=".5" y="6.500" width="24" height="8"/><rect x=".5" y="14.500" width="24" height="9"/></g>')}</span>
 <span style="left:74px;top:3px;width:32px;height:32px;background:#d0cfce;display:flex;align-items:center;justify-content:center">${svg(24,26,'<path d="M4 14h4V6h3" fill="none" stroke="#333"/><path d="M12 1h6v12l-6 6z" fill="#117865"/><path d="M4 14v9h13" fill="none" stroke="#333"/><path d="M8 24c2-6 9-12 15-13-1 6-7 11-15 13z" fill="#333"/><path d="M15 15l5-3" stroke="#fff"/>')}</span>
 <span style="left:144px;top:6px">${svg(25,25,'<circle cx="10.500" cy="10.500" r="10" fill="#fff" stroke="#333"/><path d="M4 15V10M8 15V7M12 15V9M16 15V6" stroke="#333" stroke-width="1.400"/><path d="M4 8l4-3 4 3 5-4" fill="none" stroke="#333" stroke-width=".8"/><path d="M17 17l7 7" stroke="#333" stroke-width="1.800"/>')}</span><i class="nt"></i></div>
 <div class="se">${svg(15,15,'<circle cx="9" cy="6" r="5" fill="none" stroke="#666"/><path d="M5.500 9.500L1 14" stroke="#666" stroke-width="1.100"/>')}<span>Search</span></div>
 <div class="tb"><b>Visual</b><u>General</u><s>...</s></div>
 <div class="px"><div class="ph">${svg(11,7,'<path d="M.5 .7L5.500 5.700 10.500 .7" fill="none" stroke="#333" stroke-width="1.300"/>')}<span>Ultra (Experimental)</span></div>
  <div class="pb"><div class="cd"><div class="lb">Enable</div><div class="sl"><span>Flex With Button</span>${chevD(11,6,'#444')}</div><div class="lb" style="margin-top:8px">Server</div><div class="sl ip">ws://localhost:8123</div><div class="sw"><span>Show Logs</span>${tog('off')}</div></div>
  <div class="rs">${svg(11,12,'<path d="M2 3a4.500 4.500 0 1 1-1 4M1.500 .5V3.500H4.500" fill="none" stroke="#aaa"/>')}<span>Reset to default</span></div></div></div>
 ${ACC.map(a=>`<div class="ac ${a[2]?'d':''}">${chevR(a[2]?'#999':'#333')}<span class="n">${a[0]}</span>${a[1]?tog(a[1],a[2]):''}</div>`).join('')}
</div>
<div class="da"><div class="hd hd2"><span>Data</span>${svg(14,11,'<path d="M1 .5L6.500 5.500 1 10.500M7 .5L12.500 5.500 7 10.500" fill="none" stroke="#333" stroke-width="1.100"/>')}</div>
 <div class="se2">${svg(15,15,'<circle cx="6" cy="6" r="5" fill="none" stroke="#666"/><path d="M9.500 9.500L14 14" stroke="#666" stroke-width="1.100"/>')}<span>Search</span></div>
 <div class="li">${TREE.map(t=>`<div class="ro"><span class="ch">${chevR('#666')}</span><span class="ti">${t=='UI-FieldParameter-Hi...'?svg(14,14,'<rect x=".5" y=".5" width="10" height="10" rx="2" fill="none" stroke="#333"/><path d="M4 .5v10M7 .5v10M.5 4h10M.5 7h10" stroke="#333" stroke-width=".8"/><rect x="6" y="6" width="8" height="8" fill="#444"/><path d="M6 9h8M6 11.500h8M9 6v8" stroke="#fff" stroke-width=".6"/>'):tbl}${t=='Geometry-Node'?badge:''}</span>${t}</div>`).join('')}
 <div class="ro"><span class="ch" style="padding-left:0">${svg(13,8,'<path d="M.7 1L6.500 6.500 12.300 1" fill="none" stroke="#666" stroke-width="1"/>')}</span><span class="ti">${tbl}${badge}</span>VIM</div>
 ${FIELDS.map((t,i)=>`<div class="ro f">${i==0?chk(0).replace('class="cb ','class="cb k ')+svg(14,9,'<rect x=".5" y=".5" width="13" height="8" rx="1" fill="none" stroke="#333"/><circle cx="4" cy="3.500" r="1.300" fill="#333"/><path d="M2 7c.5-2 3.500-2 4 0zM8 3h4M8 5.500h4" fill="#333" stroke="#333" stroke-width=".6"/>')+'<span style="width:5px"></span>':chk(t=='AccessToken'||t=='FilePath'||t=='Url')}${t}</div>`).join('')}</div>
 <div class="sc"></div></div>`);
</script>
</body></html>
